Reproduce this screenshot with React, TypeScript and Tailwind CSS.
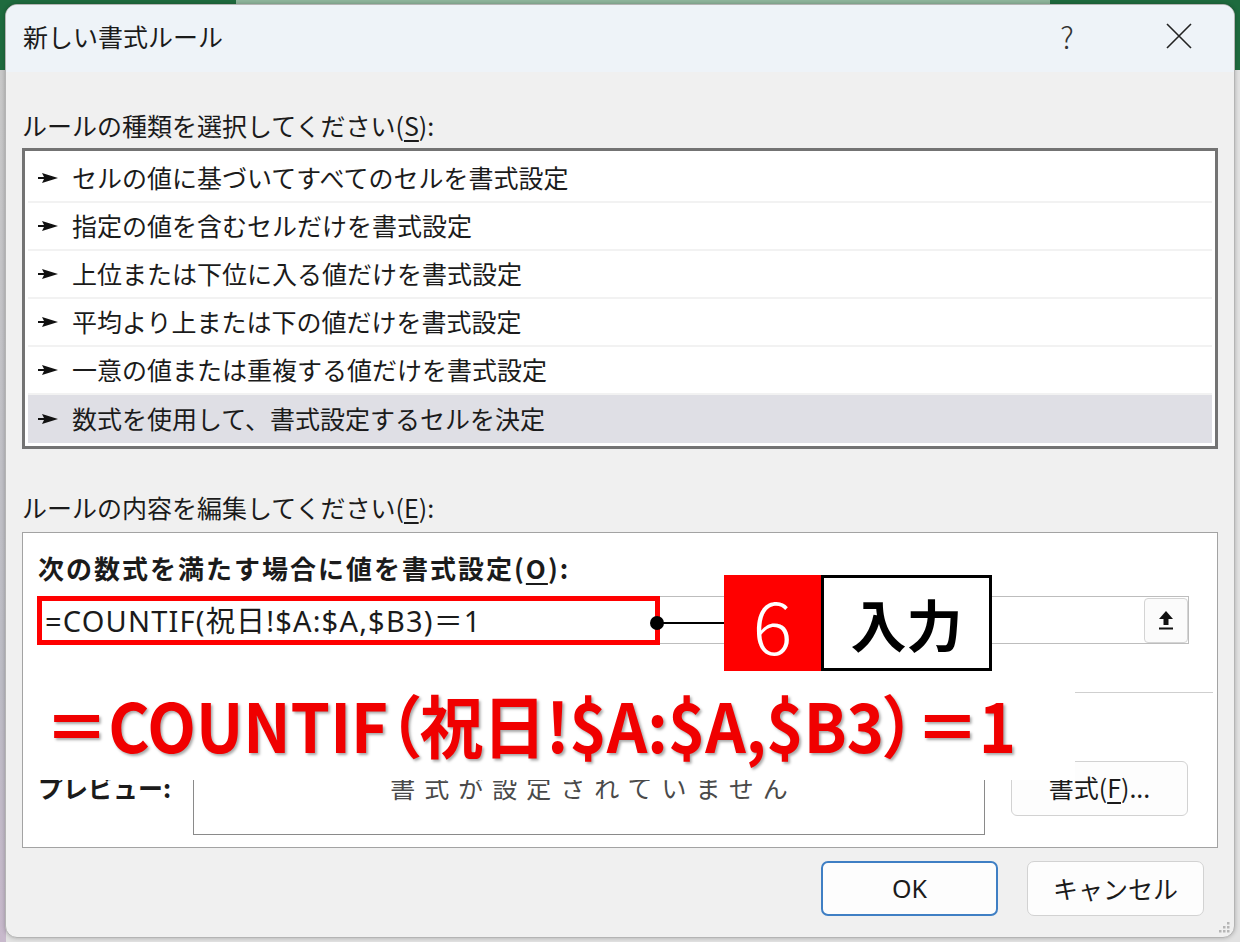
import React from "react";

const rules = [
  "セルの値に基づいてすべてのセルを書式設定",
  "指定の値を含むセルだけを書式設定",
  "上位または下位に入る値だけを書式設定",
  "平均より上または下の値だけを書式設定",
  "一意の値または重複する値だけを書式設定",
  "数式を使用して、書式設定するセルを決定",
];

function RowArrow() {
  return (
    <svg width="20" height="10" viewBox="0 0 20 10" className="shrink-0">
      <polygon points="0,4 6,4 4,0 20,5 4,10 6,6 0,6" fill="#111" />
    </svg>
  );
}

function CloseIcon() {
  return (
    <svg width="26" height="26" viewBox="0 0 26 26">
      <path d="M1 1 L25 25 M25 1 L1 25" stroke="#222" strokeWidth="1.6" fill="none" />
    </svg>
  );
}

function UploadIcon() {
  return (
    <svg width="16" height="22" viewBox="0 0 16 22">
      <polygon points="8,2 15,10 10.5,10 10.5,16 5.5,16 5.5,10 1,10" fill="#111" />
      <rect x="1" y="18.5" width="14" height="2" fill="#111" />
    </svg>
  );
}

function ResizeGrip() {
  return (
    <svg width="14" height="14" viewBox="0 0 14 14">
      <rect x="10" y="2" width="2.5" height="2.5" fill="#b5b5b5" />
      <rect x="6" y="6" width="2.5" height="2.5" fill="#b5b5b5" />
      <rect x="10" y="6" width="2.5" height="2.5" fill="#b5b5b5" />
      <rect x="2" y="10" width="2.5" height="2.5" fill="#b5b5b5" />
      <rect x="6" y="10" width="2.5" height="2.5" fill="#b5b5b5" />
      <rect x="10" y="10" width="2.5" height="2.5" fill="#b5b5b5" />
    </svg>
  );
}

export default function App() {
  return (
    <div className="relative h-[942px] w-[1240px] overflow-hidden bg-[#e2e2e2] font-[family-name:'Noto_Sans_CJK_JP','Noto_Sans',sans-serif] text-[#1b1b1b]">
      {/* Excel window behind the dialog */}
      <div className="absolute inset-x-0 top-0 flex h-[70px]">
        <div className="w-[236px] bg-[#1e6b3e]" />
        <div className="flex-1 bg-[#8fb69c]" />
        <div className="w-[190px] bg-[#1e6b3e]" />
      </div>
      <div className="absolute bottom-0 left-0 top-[70px] w-[6px] bg-[linear-gradient(#c9c9c9,#bdbdc6_70%,#c8b9cc)]" />

      {/* dialog */}
      <div className="relative ml-[5px] mt-[4px] flex h-[934px] w-[1230px] flex-col overflow-hidden rounded-[12px] border border-[#b4b4b4] bg-[#f0f0f0] shadow-[0_0_4px_rgba(0,0,0,0.25)]">
        {/* title bar */}
        <div className="flex h-[67px] shrink-0 items-center bg-[#eef3f8] pb-[5px] pl-[17px]">
          <span className="flex-1 text-[25px] leading-none">新しい書式ルール</span>
          <span className="w-[40px] text-center text-[30px] font-light leading-none text-[#333]">?</span>
          <span className="ml-[72px] mr-[35px] flex w-[40px] justify-center">
            <CloseIcon />
          </span>
        </div>

        <div className="flex flex-1 flex-col px-[16px]">
          <div className="mt-[36px] h-[34px] text-[25px] leading-[34px]">
            ルールの種類を選択してください(<span className="underline underline-offset-4">S</span>):
          </div>

          {/* rule type list */}
          <div className="mt-[6px] h-[301px] border-[3px] border-[#737373] bg-white px-[3px] pb-[3px] pt-[4px]">
            {rules.map((r, i) => (
              <div
                key={r}
                className={
                  i === rules.length - 1
                    ? "flex h-[48px] items-center gap-[14px] bg-[#dfdfe5] pl-[10px] text-[25px]"
                    : "flex h-[48px] items-center gap-[14px] border-b-2 border-[#f2f2f2] pl-[10px] text-[25px]"
                }
              >
                <RowArrow />
                <span>{r}</span>
              </div>
            ))}
          </div>

          <div className="mt-[41px] h-[34px] text-[25px] leading-[34px]">
            ルールの内容を編集してください(<span className="underline underline-offset-4">E</span>):
          </div>

          {/* rule edit panel */}
          <div className="mt-[8px] flex h-[316px] flex-col border border-[#a3a3a3] bg-white">
            <div className="ml-[15px] mt-[18px] h-[34px] text-[26px] font-bold leading-[34px] tracking-[2px]">
              次の数式を満たす場合に値を書式設定(<span className="underline underline-offset-4">O</span>):
            </div>
            <div className="ml-[15px] mt-[11px] flex h-[48px] w-[1151px] items-center border border-[#bdbdbd] bg-white pl-[6px]">
              <span className="flex-1 font-[family-name:'Noto_Sans','Noto_Sans_CJK_JP',sans-serif] text-[29px] leading-none tracking-[1.2px]">
                =COUNTIF(祝日!$A:$A,$B3)＝1
              </span>
              <span className="flex h-[45px] w-[44px] items-center justify-center rounded-[4px] border border-[#d4d4d4] bg-[#fbfbfb]">
                <UploadIcon />
              </span>
            </div>
            <div className="ml-[15px] mr-[4px] mt-[48px] h-px bg-[#cfcfcf]" />
            <div className="mt-[48px] flex h-[94px] items-center pl-[15px]">
              <span className="w-[155px] text-[25px] font-bold">プレビュー:</span>
              <div className="flex h-[94px] w-[792px] items-center justify-center border border-[#8a8a8a] pl-[9px] text-[25px] tracking-[9px] text-[#4a4a4a]">
                書式が設定されていません
              </div>
              <span className="ml-[26px] flex h-[55px] w-[177px] items-center justify-center rounded-[6px] border border-[#d2d2d2] bg-[#fdfdfd] text-[25px]">
                書式(<span className="underline underline-offset-4">F</span>)...
              </span>
            </div>
          </div>

          {/* OK / cancel */}
          <div className="mr-[14px] mt-[13px] flex justify-end gap-[29px]">
            <span className="flex h-[55px] w-[177px] items-center justify-center rounded-[7px] border-2 border-[#3f7fc4] bg-[#fdfdfd] font-[family-name:'Noto_Sans','Noto_Sans_CJK_JP',sans-serif] text-[25px]">
              OK
            </span>
            <span className="flex h-[55px] w-[177px] items-center justify-center rounded-[7px] border border-[#d2d2d2] bg-[#fdfdfd] text-[25px]">
              キャンセル
            </span>
          </div>
        </div>

        <div className="absolute bottom-[3px] right-[3px]">
          <ResizeGrip />
        </div>
      </div>

      {/* annotation overlays */}
      <div className="absolute left-[37px] top-[596px] h-[49px] w-[623px] border-[5px] border-[#ff0000]" />
      <div className="absolute left-[650px] top-[616px] h-[14px] w-[14px] rounded-full bg-black" />
      <div className="absolute left-[657px] top-[622px] h-[2px] w-[67px] bg-black" />
      <div className="absolute left-[724px] top-[575px] flex h-[96px] w-[97px] items-center justify-center bg-[#ff0000] text-[74px] font-light leading-none text-white">
        6
      </div>
      <div className="absolute left-[821px] top-[575px] flex h-[96px] w-[171px] items-center justify-center border-[3px] border-black bg-white text-[56px] font-bold leading-none text-black">
        入力
      </div>

      <div className="absolute left-[23px] top-[676px] h-[104px] w-[1052px] bg-white pl-[22px] pt-[8px]">
        <span className="inline-block origin-left scale-x-[0.93] whitespace-nowrap text-[68px] font-bold leading-[80px] text-[#f00000] [font-feature-settings:'palt'] [text-shadow:2px_2px_3px_rgba(0,0,0,0.35)]">
          ＝COUNTIF（祝日!$A:$A,$B3）＝1
        </span>
      </div>
    </div>
  );
}
